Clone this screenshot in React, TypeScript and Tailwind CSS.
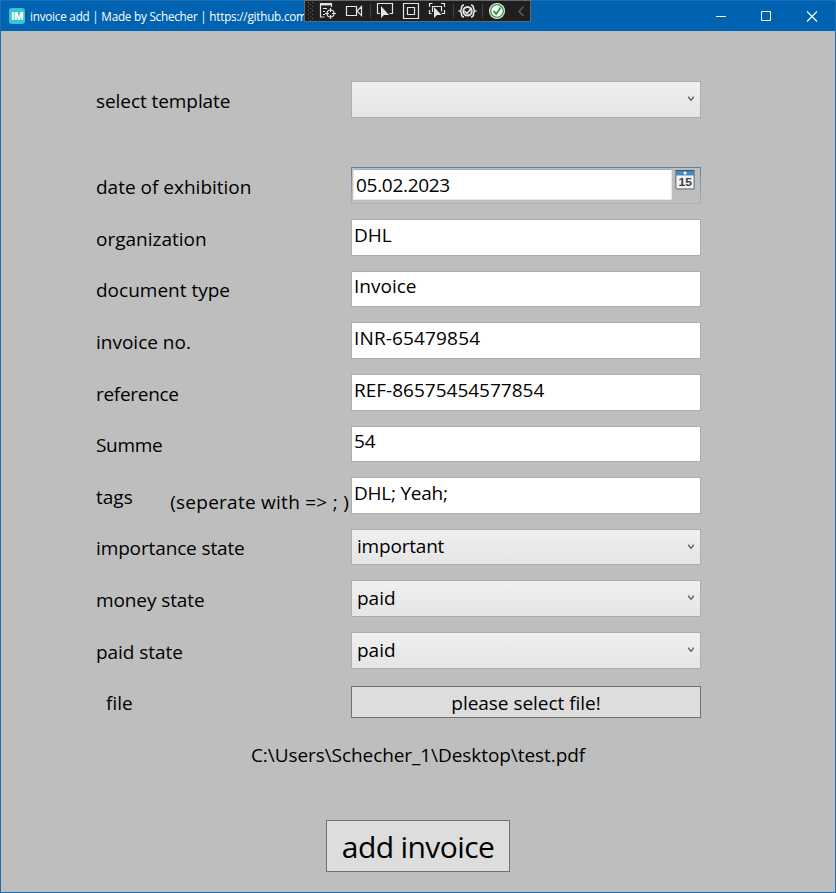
import React from "react";

type Kind = "select" | "date" | "text" | "file";

interface Row {
  label: string;
  value: string;
  kind: Kind;
  row: string;
  box: string;
  labelClass: string;
  valueClass?: string;
  hint?: string;
}

const rows: Row[] = [
  { label: "select template", value: "", kind: "select", row: "h-[86px]", box: "h-[37px]", labelClass: "pt-[7px] tracking-[-0.07px]" },
  { label: "date of exhibition", value: "05.02.2023", kind: "date", row: "h-[52px]", box: "h-[37px]", labelClass: "pt-[7px]", valueClass: "tracking-[-0.3px]" },
  { label: "organization", value: "DHL", kind: "text", row: "h-[52px]", box: "h-[37px]", labelClass: "pt-[7px]", valueClass: "leading-[30px]" },
  { label: "document type", value: "Invoice", kind: "text", row: "h-[51px]", box: "h-[36px]", labelClass: "pt-[6px]", valueClass: "leading-[28px]" },
  { label: "invoice no.", value: "INR-65479854", kind: "text", row: "h-[52px]", box: "h-[37px]", labelClass: "pt-[7px]", valueClass: "leading-[30px] tracking-[0.15px]" },
  { label: "reference", value: "REF-86575454577854", kind: "text", row: "h-[52px]", box: "h-[37px]", labelClass: "pt-[7px] tracking-[-0.3px]", valueClass: "leading-[30px]" },
  { label: "Summe", value: "54", kind: "text", row: "h-[51px]", box: "h-[36px]", labelClass: "pt-[6px] tracking-[-0.3px]", valueClass: "leading-[28px]" },
  { label: "tags", value: "DHL; Yeah;", kind: "text", row: "h-[52px]", box: "h-[37px]", labelClass: "pt-[7px]", valueClass: "leading-[30px] tracking-[-0.25px]", hint: "(seperate with => ; )" },
  { label: "importance state", value: "important", kind: "select", row: "h-[51px]", box: "h-[36px]", labelClass: "pt-[6px] tracking-[-0.13px]", valueClass: "pt-[3px] tracking-[-0.2px]" },
  { label: "money state", value: "paid", kind: "select", row: "h-[52px]", box: "h-[37px]", labelClass: "pt-[7px] tracking-[-0.1px]", valueClass: "pt-[4px]" },
  { label: "paid state", value: "paid", kind: "select", row: "h-[54px]", box: "h-[37px]", labelClass: "pt-[7px] tracking-[-0.05px]", valueClass: "pt-[4px]" },
  { label: "file", value: "please select file!", kind: "file", row: "h-[52px]", box: "h-[32px]", labelClass: "pl-[10px] pt-[4px]" },
];

function CalendarIcon() {
  return (
    <svg width="20" height="20" viewBox="0 0 20 20" className="shrink-0">
      <rect x="0.75" y="1" width="18.5" height="18" rx="1" fill="#f2f2f2" stroke="#85898d" strokeWidth="1.5" />
      <rect x="1" y="1" width="18" height="4.5" fill="#4689bd" />
      <path d="M0.5 0.5h19" stroke="#34536d" />
      <circle cx="10" cy="3" r="1.5" fill="#fff" />
      <text x="3.5" y="16" fontSize="11" fontWeight="600" fill="#404040" fontFamily="Liberation Sans, sans-serif" textLength="13.5" lengthAdjust="spacingAndGlyphs">15</text>
    </svg>
  );
}

function Field({ kind, value, box, valueClass = "" }: Row) {
  if (kind === "select") {
    return (
      <div className={`flex w-[350px] justify-between border border-[#acacac] bg-linear-to-b from-[#f0f0f0] to-[#e5e5e5] pl-[5px] pr-[6px] ${box}`}>
        <span className={`leading-[27px] ${valueClass}`}>{value}</span>
        <svg width="6" height="6" viewBox="0 0 6 6" className="mt-[14px]">
          <path d="M0.8 0.5v1.2L3 4.2 5.2 1.7V0.5" fill="none" stroke="#606060" strokeWidth="1.4" />
        </svg>
      </div>
    );
  }
  if (kind === "date") {
    return (
      <div className={`w-[350px] bg-linear-to-b from-[#5f7f9f] to-[#aab2ba] p-px ${box}`}>
        <div className="flex h-full bg-[#bebebe] pl-px pr-[5px] pt-px">
          <div className={`mr-[3px] h-[31px] w-[319px] border border-[#e3e9ef] border-t-[#abadb3] bg-white pl-[2px] leading-[30px] ${valueClass}`}>{value}</div>
          <div className="pt-px">
            <CalendarIcon />
          </div>
        </div>
      </div>
    );
  }
  if (kind === "file") {
    return <button className={`w-[350px] border border-[#707070] bg-[#dddddd] pt-[2px] leading-[28px] tracking-[-0.03px] ${box}`}>{value}</button>;
  }
  return <div className={`w-[350px] border border-[#abadb3] bg-white pl-[2px] ${valueClass} ${box}`}>{value}</div>;
}

function DebugToolbar() {
  return (
    <div className="absolute -top-px left-[303px] h-[22px] w-[227px] border border-[#65676a] bg-[#1f1f1f]">
      <svg width="225" height="20" viewBox="305 1 225 20" fill="none" stroke="#e4e4e4" strokeWidth="1.2">
        <g fill="#666" stroke="none">
          {[2, 6, 10, 14, 18].map((y) => (
            <React.Fragment key={y}>
              <rect x="308" y={y} width="1" height="1" />
              <rect x="312" y={y} width="1" height="1" />
              <rect x="310" y={y + 2} width="1" height="1" />
            </React.Fragment>
          ))}
        </g>
        <path d="M320.5 3v14h4M331.5 3v4" />
        <path d="M320 4.2h12" strokeWidth="2.4" />
        <path d="M323 8.5h4M323 11.5h2M323 14.5h2" />
        <circle cx="330.5" cy="13.5" r="3.5" />
        <path d="M330.5 8v4M330.5 15v4M325 13.5h4M332 13.5h4" />
        <path d="M346.5 6.5h10v9h-10zM357 11l4.5-4.500v9z" />
        <path d="M370.5 4v14" stroke="#424245" />
        <path d="M380 13.5h-2.5v-10h15v10h-3" />
        <path d="M381 6v12l3-3h5z" fill="#e4e4e4" stroke="none" />
        <path d="M403.5 3.5h15v15h-15zM407.5 7.5h7v7h-7z" />
        <path d="M429.5 7V3.5h3M441 3.5h3.5V7M444.5 10v3.5h-3M429.5 10v3.5h2M432.5 12V6.5h9v5" />
        <path d="M434 7v11l3-3h4.5z" fill="#e4e4e4" stroke="none" />
        <path d="M453.5 4v14M482.5 4v14" stroke="#424245" />
        <path d="M464 5c-2 0-2.500 1-2.500 3s0 2.500-1.500 3c1.500.5 1.500 1 1.500 3s.5 3 2.500 3M471 5c2 0 2.500 1 2.500 3s0 2.500 1.500 3c-1.500.5-1.500 1-1.500 3s-.5 3-2.500 3" strokeWidth="1.6" />
        <circle cx="467.5" cy="11.2" r="4.2" strokeWidth="2" />
        <path d="M464.5 11l2.5 2.5 4.500-5.500" strokeWidth="1.6" />
        <circle cx="497" cy="11" r="8" fill="#e9f3e9" stroke="none" />
        <circle cx="497" cy="11" r="6.3" fill="#fff" stroke="#369944" strokeWidth="1.3" />
        <path d="M493.5 11l2.7 3 4.500-6.500" stroke="#369944" strokeWidth="2" />
        <path d="M523.5 6.5l-4.500 5 4.500 4.500" stroke="#626266" />
      </svg>
    </div>
  );
}

function TitleBar() {
  return (
    <header className="relative flex h-[31px] items-center border border-b-0 border-[#1a70b8] bg-[#0063b1] text-white">
      <div className="ml-2 -mt-px flex size-4 items-center justify-center rounded-[3px] bg-[#31c8cf] text-[10px] font-extrabold leading-none tracking-[-0.5px]">IM</div>
      <h1 className="ml-[5px] w-[275px] overflow-hidden whitespace-nowrap text-[11.7px] leading-5 tracking-[-0.22px]">invoice add | Made by Schecher | https://github.com</h1>
      <DebugToolbar />
      <svg width="102" height="12" viewBox="0 0 102 12" fill="none" stroke="#fff" className="ml-auto mr-[17px] -mt-px">
        <path d="M0 6.5h10M45.5 1.500h9v9h-9z" />
        <path d="M91 1.5l10 10M101 1.500l-10 10" strokeWidth="1.1" />
      </svg>
    </header>
  );
}

export default function App() {
  return (
    <div className="flex h-[893px] w-[836px] flex-col bg-[#bebebe] font-['Open_Sans','Noto_Sans',sans-serif] text-[19px] text-black">
      <TitleBar />
      <main className="flex flex-1 flex-col border border-t-0 border-[#1a70b8] pt-[50px]">
        {rows.map((r) => (
          <div key={r.label} className={`flex items-start pl-[95px] ${r.row}`}>
            <div className="flex w-[255px] justify-between whitespace-nowrap">
              <span className={`leading-[27px] ${r.labelClass}`}>{r.label}</span>
              {r.hint && <span className="pt-[12px] pr-[2px] leading-[27px] tracking-[0.26px]">{r.hint}</span>}
            </div>
            <Field {...r} />
          </div>
        ))}
        <p className="mt-[4px] text-center leading-[27px] tracking-[-0.07px]">C:\Users\Schecher_1\Desktop\test.pdf</p>
        <button className="mt-[51px] ml-[325px] h-[52px] w-[184px] border border-[#707070] bg-[#dddddd] pt-[2px] text-[30px] leading-[48px] tracking-[-0.6px]">add invoice</button>
      </main>
    </div>
  );
}
